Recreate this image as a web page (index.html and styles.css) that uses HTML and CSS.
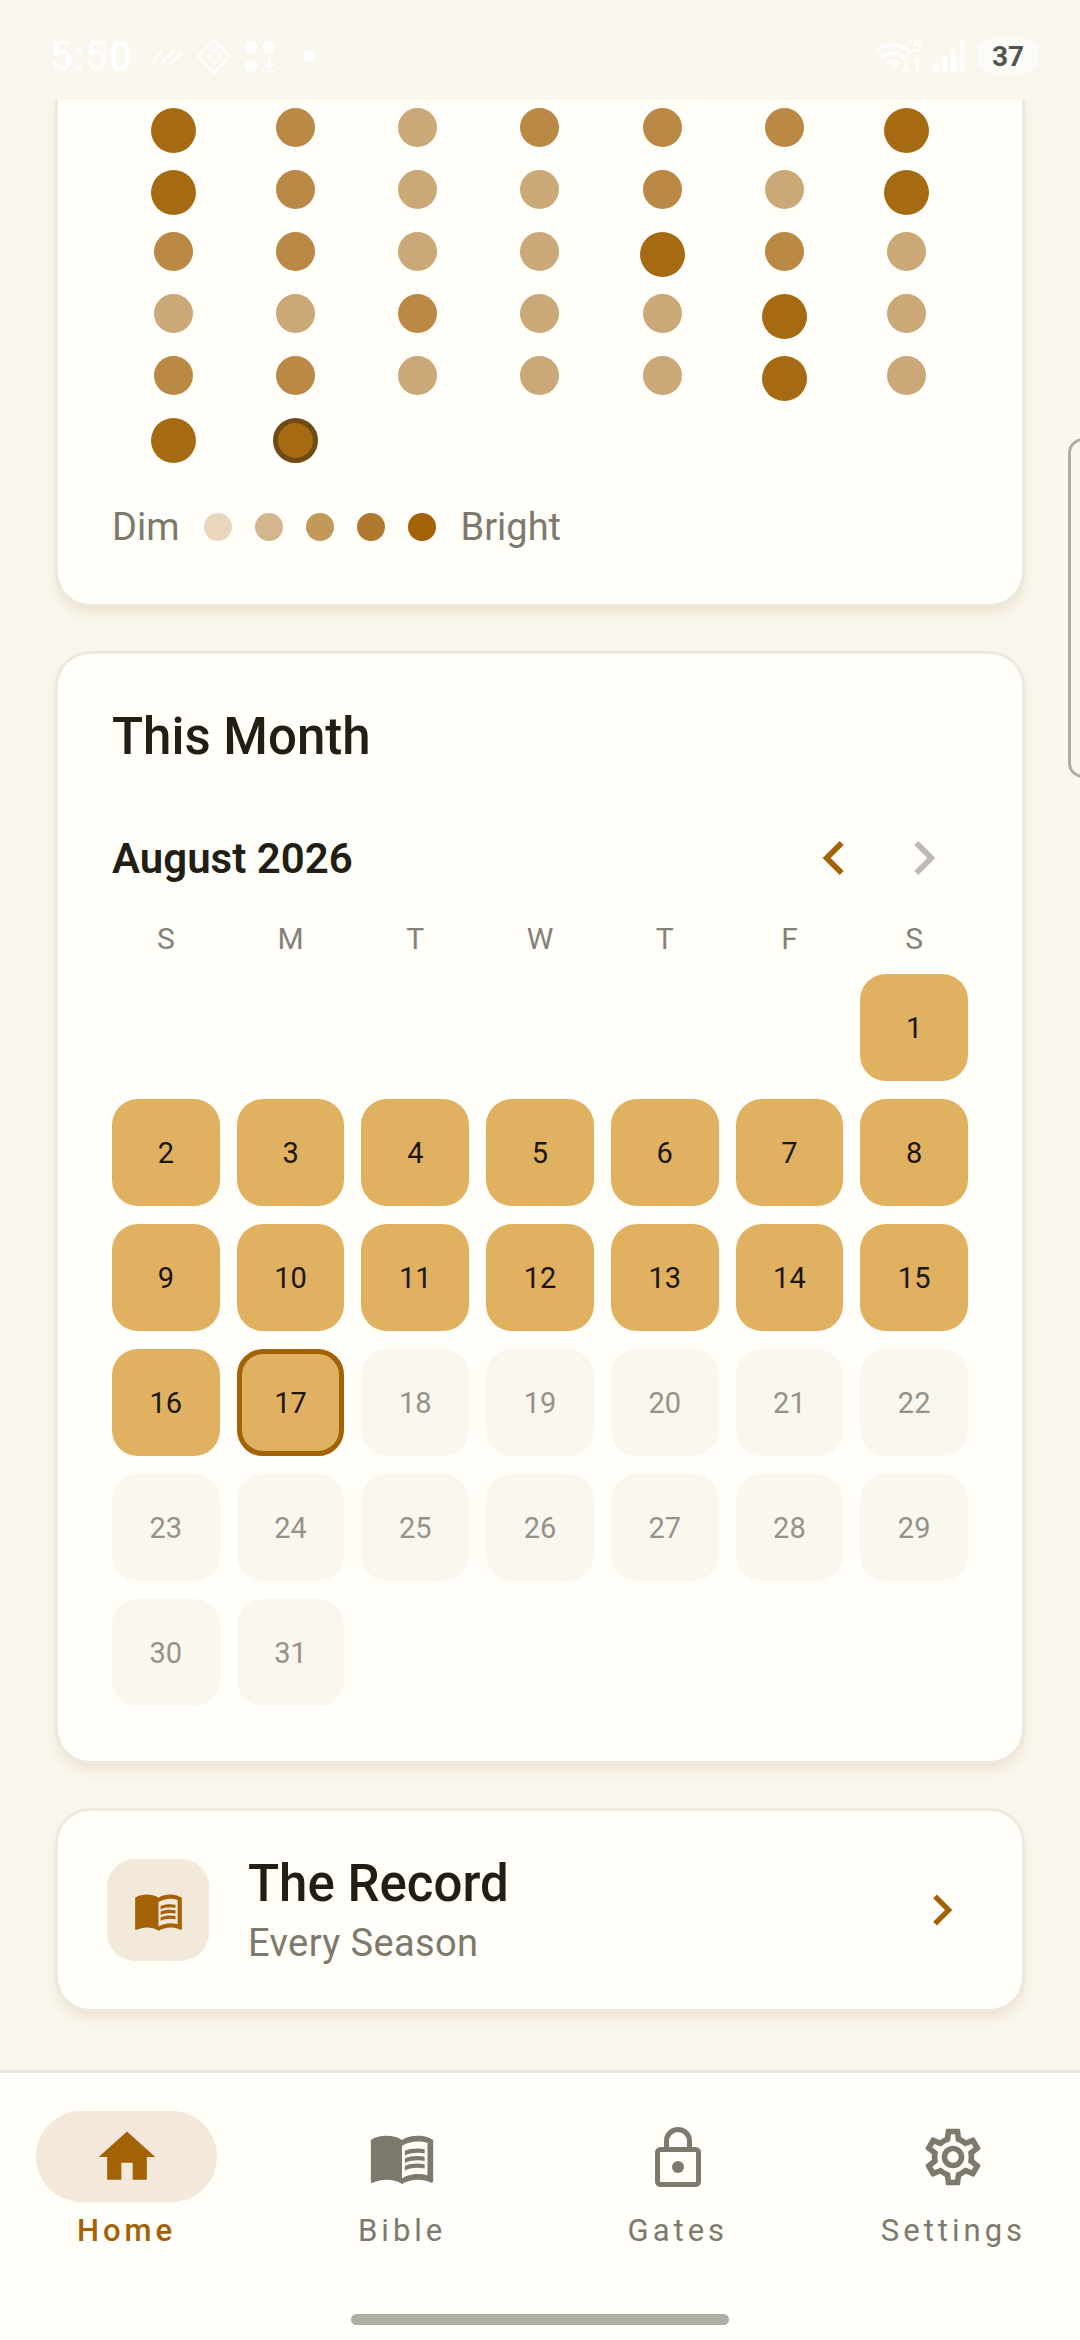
FILE: index.html
```html
<!DOCTYPE html>
<html lang="en">
<head>
<meta charset="utf-8">
<title>Home</title>
<link rel="stylesheet" href="styles.css">
</head>
<body>
<div class="screen">
  <header class="status">
    <div class="status-left">
      <span class="clock">5:50</span>
      <svg class="st-a" viewBox="0 0 30 15"><path d="M1 14.500l2-2M3.500 9.500l6-6.500M10 14l9-10M20 4l2-2M19 14.500l1.500-1.500M22.500 10.500l6-6.500" fill="none" stroke="#fff" stroke-width="2.500" stroke-linecap="round"/></svg>
      <svg class="st-b" viewBox="0 0 36 37"><path d="M18 2L34 18.500 18 35 2 18.500Z" fill="none" stroke="#fff" stroke-width="2.500" stroke-linejoin="round"/><path d="M18 10l4 4h-8ZM11 18l4-4v8ZM25 18l-4 4v-8ZM18 27l-4-4h8Z" fill="#fff"/></svg>
      <svg class="st-c" viewBox="0 0 31 31"><circle cx="6" cy="6" r="6" fill="#fff"/><circle cx="24" cy="6" r="6" fill="#fff"/><circle cx="6" cy="25" r="6" fill="#fff"/><path d="M22.500 17h3v6h3.500l-5 5-5-5h3.500ZM18 29h12v2H18Z" fill="#fff"/></svg>
      <span class="st-dot"></span>
    </div>
    <div class="status-right">
      <span class="wifi-wrap">
        <svg class="st-wifi" viewBox="0 0 47 33"><path d="M2 11a24 24 0 0 1 32 0M7.500 17a16 16 0 0 1 21 0M13 23a8 8 0 0 1 10 0" fill="none" stroke="#fff" stroke-width="3.500" stroke-linecap="round"/><circle cx="19" cy="26" r="2.800" fill="#fff"/><path d="M31 19v13M27.500 28l3.500 4 3.500-4M42 32V19M38.500 23l3.500-4 3.500 4" fill="none" stroke="#fff" stroke-width="2.200"/></svg>
        <span class="st-five">5</span>
      </span>
      <svg class="st-signal" viewBox="0 0 31 33"><rect x="0" y="24" width="4.500" height="9" rx="2" fill="#fff"/><rect x="8.500" y="16" width="4.500" height="17" rx="2" fill="#fff"/><rect x="17" y="8" width="4.500" height="25" rx="2" fill="#fff"/><rect x="26" y="0" width="4.500" height="33" rx="2" fill="#fff"/></svg>
      <span class="battery">37</span>
    </div>
  </header>

  <main class="scroller">
    <section class="card card-stars">
      <div class="stars">
        <i class="s l"></i><i class="s m"></i><i class="s d"></i><i class="s m"></i><i class="s m"></i><i class="s m"></i><i class="s l"></i>
        <i class="s l"></i><i class="s m"></i><i class="s d"></i><i class="s d"></i><i class="s m"></i><i class="s d"></i><i class="s l"></i>
        <i class="s m"></i><i class="s m"></i><i class="s d"></i><i class="s d"></i><i class="s l"></i><i class="s m"></i><i class="s d"></i>
        <i class="s d"></i><i class="s d"></i><i class="s m"></i><i class="s d"></i><i class="s d"></i><i class="s l"></i><i class="s d"></i>
        <i class="s m"></i><i class="s m"></i><i class="s d"></i><i class="s d"></i><i class="s d"></i><i class="s l"></i><i class="s d"></i>
        <i class="s l"></i><i class="s l today"></i>
      </div>
      <div class="legend">
        <span class="legend-text">Dim</span>
        <span class="legend-dots">
          <i class="ld ld1"></i><i class="ld ld2"></i><i class="ld ld3"></i><i class="ld ld4"></i><i class="ld ld5"></i>
        </span>
        <span class="legend-text">Bright</span>
      </div>
    </section>

    <section class="card card-month">
      <h2 class="card-title">This Month</h2>
      <div class="month-head">
        <span class="month-name">August 2026</span>
        <span class="month-nav">
          <svg class="chev chev-on" viewBox="0 0 24 24"><path d="M15.410 7.410L14 6l-6 6 6 6 1.410-1.410L10.830 12z"/></svg>
          <svg class="chev chev-off" viewBox="0 0 24 24"><path d="M10 6L8.590 7.410 13.170 12l-4.580 4.590L10 18l6-6z"/></svg>
        </span>
      </div>
      <div class="weekdays"><span>S</span><span>M</span><span>T</span><span>W</span><span>T</span><span>F</span><span>S</span></div>
      <div class="days">
        <span class="blank"></span><span class="blank"></span><span class="blank"></span><span class="blank"></span><span class="blank"></span><span class="blank"></span>
        <span class="day on">1</span>
        <span class="day on">2</span><span class="day on">3</span><span class="day on">4</span><span class="day on">5</span><span class="day on">6</span><span class="day on">7</span><span class="day on">8</span>
        <span class="day on">9</span><span class="day on">10</span><span class="day on">11</span><span class="day on">12</span><span class="day on">13</span><span class="day on">14</span><span class="day on">15</span>
        <span class="day on">16</span><span class="day on cur">17</span><span class="day">18</span><span class="day">19</span><span class="day">20</span><span class="day">21</span><span class="day">22</span>
        <span class="day">23</span><span class="day">24</span><span class="day">25</span><span class="day">26</span><span class="day">27</span><span class="day">28</span><span class="day">29</span>
        <span class="day">30</span><span class="day">31</span>
      </div>
    </section>

    <section class="card card-record">
      <span class="record-tile">
        <svg class="book-sm" viewBox="0 0 24 24"><path d="M21 5c-1.110-.35-2.330-.5-3.500-.5-1.950 0-4.050.4-5.500 1.500-1.450-1.100-3.550-1.500-5.500-1.500S2.450 4.900 1 6v14.650c0 .25.25.5.5.5.1 0 .15-.05.25-.05C3.100 20.450 5.050 20 6.500 20c1.950 0 4.050.4 5.500 1.500 1.350-.85 3.800-1.500 5.500-1.500 1.650 0 3.350.3 4.750 1.050.1.05.15.05.25.05.25 0 .5-.25.5-.5V6c-.6-.45-1.250-.75-2-1zm0 13.500c-1.100-.35-2.300-.5-3.500-.5-1.700 0-4.150.65-5.500 1.500V8c1.350-.85 3.800-1.500 5.500-1.500 1.200 0 2.400.15 3.500.5v11.500z"/><path d="M17.500 10.500c.88 0 1.730.09 2.500.26V9.240c-.79-.15-1.640-.24-2.500-.24-1.700 0-3.240.29-4.500.83v1.660c1.130-.64 2.700-.99 4.500-.99zM13 12.490v1.660c1.130-.64 2.700-.99 4.500-.99.88 0 1.730.09 2.500.26V11.900c-.79-.15-1.640-.24-2.500-.24-1.700 0-3.240.3-4.500.83zM17.500 14.330c-1.700 0-3.240.29-4.500.83v1.660c1.130-.64 2.700-.99 4.500-.99.88 0 1.730.09 2.500.26v-1.520c-.79-.16-1.640-.24-2.500-.24z"/></svg>
      </span>
      <span class="record-text">
        <span class="record-title">The Record</span>
        <span class="record-sub">Every Season</span>
      </span>
      <svg class="record-chev" viewBox="0 0 24 24"><path d="M10 6L8.590 7.410 13.170 12l-4.580 4.590L10 18l6-6z"/></svg>
    </section>
  </main>

  <nav class="nav">
    <a class="nav-item active">
      <span class="nav-icon">
        <svg class="ic" viewBox="0 0 24 24"><path d="M10 20v-6h4v6h5v-8h3L12 3 2 12h3v8z"/></svg>
      </span>
      <span class="nav-label">Home</span>
    </a>
    <a class="nav-item">
      <span class="nav-icon">
        <svg class="ic" viewBox="0 0 24 24"><path d="M21 5c-1.110-.35-2.330-.5-3.500-.5-1.950 0-4.050.4-5.500 1.500-1.450-1.100-3.550-1.500-5.500-1.500S2.450 4.900 1 6v14.650c0 .25.25.5.5.5.1 0 .15-.05.25-.05C3.100 20.450 5.050 20 6.500 20c1.950 0 4.050.4 5.500 1.500 1.350-.85 3.800-1.500 5.500-1.500 1.650 0 3.350.3 4.750 1.050.1.05.15.05.25.05.25 0 .5-.25.5-.5V6c-.6-.45-1.250-.75-2-1zm0 13.500c-1.100-.35-2.300-.5-3.500-.5-1.700 0-4.150.65-5.500 1.500V8c1.350-.85 3.800-1.500 5.500-1.500 1.200 0 2.400.15 3.500.5v11.500z"/><path d="M17.500 10.500c.88 0 1.730.09 2.500.26V9.240c-.79-.15-1.640-.24-2.500-.24-1.700 0-3.240.29-4.500.83v1.660c1.130-.64 2.700-.99 4.500-.99zM13 12.490v1.660c1.130-.64 2.700-.99 4.500-.99.88 0 1.730.09 2.500.26V11.900c-.79-.15-1.640-.24-2.500-.24-1.700 0-3.240.3-4.500.83zM17.500 14.330c-1.700 0-3.240.29-4.500.83v1.660c1.130-.64 2.700-.99 4.500-.99.88 0 1.730.09 2.500.26v-1.520c-.79-.16-1.640-.24-2.500-.24z"/></svg>
      </span>
      <span class="nav-label">Bible</span>
    </a>
    <a class="nav-item">
      <span class="nav-icon">
        <svg class="ic-lock" viewBox="0 0 46 60"><path d="M11.500 23V14a11.500 11.500 0 0 1 23 0v9" fill="none" stroke="#7D796C" stroke-width="5"/><rect x="2.500" y="22.500" width="41" height="35" rx="3" fill="none" stroke="#7D796C" stroke-width="5"/><circle cx="23" cy="40" r="6" fill="#7D796C"/></svg>
      </span>
      <span class="nav-label">Gates</span>
    </a>
    <a class="nav-item">
      <span class="nav-icon">
        <svg class="ic" viewBox="0 0 24 24"><path d="M19.430 12.980c.04-.32.07-.64.07-.98 0-.34-.03-.66-.07-.98l2.110-1.650c.19-.15.24-.42.12-.64l-2-3.460c-.09-.16-.26-.25-.44-.25-.06 0-.12.01-.17.03l-2.490 1c-.52-.4-1.080-.73-1.690-.98l-.38-2.650C14.460 2.180 14.250 2 14 2h-4c-.25 0-.46.18-.49.42l-.38 2.650c-.61.25-1.170.59-1.690.98l-2.490-1c-.06-.02-.12-.03-.18-.03-.17 0-.34.09-.43.25l-2 3.460c-.13.22-.07.49.12.64l2.110 1.650c-.04.32-.07.65-.07.98 0 .33.03.66.07.98l-2.110 1.650c-.19.15-.24.42-.12.64l2 3.460c.09.16.26.25.44.25.06 0 .12-.01.17-.03l2.490-1c.52.4 1.080.73 1.690.98l.38 2.650c.03.24.24.42.49.42h4c.25 0 .46-.18.49-.42l.38-2.650c.61-.25 1.170-.59 1.690-.98l2.490 1c.06.02.12.03.18.03.17 0 .34-.09.43-.25l2-3.460c.12-.22.07-.49-.12-.64l-2.110-1.650zm-1.980-1.710c.04.31.05.52.05.73 0 .21-.02.43-.05.73l-.14 1.130.89.7 1.080.84-.7 1.210-1.270-.51-1.040-.42-.9.68c-.43.32-.84.56-1.250.73l-1.060.43-.16 1.130-.2 1.350h-1.400l-.19-1.350-.16-1.130-1.060-.43c-.43-.18-.83-.41-1.230-.71l-.91-.7-1.060.43-1.270.51-.7-1.210 1.080-.84.89-.7-.14-1.130c-.03-.31-.05-.54-.05-.74s.02-.43.05-.73l.14-1.130-.89-.7-1.080-.84.7-1.210 1.270.51 1.040.42.9-.68c.43-.32.84-.56 1.250-.73l1.060-.43.16-1.130.2-1.350h1.390l.19 1.350.16 1.130 1.060.43c.43.18.83.41 1.230.71l.91.7 1.060-.43 1.270-.51.7 1.210-1.070.85-.89.7.14 1.130zM12 8c-2.210 0-4 1.790-4 4s1.790 4 4 4 4-1.790 4-4-1.790-4-4-4zm0 6c-1.100 0-2-.9-2-2s.9-2 2-2 2 .9 2 2-.9 2-2 2z"/></svg>
      </span>
      <span class="nav-label">Settings</span>
    </a>
  </nav>

  <span class="edge-handle"></span>
  <span class="home-bar"></span>
</div>
</body>
</html>
```
FILE: styles.css
```css
* { box-sizing: border-box; }
html, body { margin: 0; padding: 0; }
body { background: #FAF7EE; font-family: Roboto, "Noto Sans", sans-serif; }
.screen { position: relative; width: 1080px; height: 2340px; overflow: hidden; display: flex; flex-direction: column; background: #FAF7EE; }

.status { flex: 0 0 100px; height: 100px; display: flex; justify-content: space-between; align-items: center; padding: 12px 41px 0 50px; background: #FAF7EE; position: relative; z-index: 2; }
.status-left, .status-right { display: flex; align-items: center; }
.clock { width: 81px; font-size: 40px; font-weight: 500; letter-spacing: 1px; color: #fff; white-space: nowrap; }
.st-a { width: 30px; height: 15px; margin-left: 21px; }
.st-b { width: 36px; height: 37px; margin-left: 14px; }
.st-c { width: 31px; height: 31px; margin-left: 13px; }
.st-dot { width: 12px; height: 12px; border-radius: 50%; background: #fff; margin-left: 27px; }
.wifi-wrap { position: relative; width: 47px; height: 33px; }
.st-wifi { display: block; width: 47px; height: 33px; }
.st-five { position: absolute; right: 0; top: -2px; font-size: 17px; line-height: 17px; font-weight: 500; color: #fff; }
.st-signal { width: 31px; height: 33px; margin-left: 12px; }
.battery { width: 62px; height: 36px; margin-left: 12px; border-radius: 18px; background: #FDFBF7; color: #55544F; font-size: 28px; font-weight: 700; display: flex; align-items: center; justify-content: center; }

.scroller { flex: 1; min-height: 0; padding: 0 58px; display: flex; flex-direction: column; gap: 50px; overflow: hidden; }
.card { flex: none; background: #FFFEF8; border-radius: 32px; box-shadow: 0 0 0 3px #ECE9E1, 0 7px 14px rgba(190, 140, 70, .24); }
.card-stars { height: 504px; padding: 8px 54px 0; border-radius: 0 0 32px 32px; }
.stars { display: grid; grid-template-columns: repeat(7, 1fr); grid-auto-rows: 39px; row-gap: 23px; justify-items: center; align-items: start; height: 349px; }
.s { display: block; border-radius: 50%; }
.s.l { width: 45px; height: 45px; background: #A66A12; }
.s.m { width: 39px; height: 39px; background: #B98945; }
.s.d { width: 39px; height: 39px; background: #CBA877; }
.s.today { border: 5px solid #6F4A14; }
.legend { display: flex; align-items: center; height: 50px; margin-top: 45px; }
.legend-text { font-size: 38px; color: #7D796C; }
.legend-dots { display: flex; gap: 23px; margin: 0 25px 0 24px; }
.ld { display: block; width: 28px; height: 28px; border-radius: 50%; }
.ld1 { background: #E8D7BC; }
.ld2 { background: #D3B68D; }
.ld3 { background: #C2985B; }
.ld4 { background: #B0792F; }
.ld5 { background: #A46206; }

.card-month { height: 1107px; padding: 49px 54px 0; }
.card-title { margin: 0; font-size: 51px; line-height: 68px; font-weight: 500; color: #231E14; }
.month-head { display: flex; justify-content: space-between; align-items: center; height: 60px; margin-top: 57px; }
.month-name { font-size: 42px; font-weight: 600; color: #231E14; }
.month-nav { display: flex; gap: 22px; margin-right: 10px; }
.chev { display: block; width: 68px; height: 68px; }
.chev-on { fill: #A46206; }
.chev-off { fill: #BDBAB4; }
.weekdays { display: grid; grid-template-columns: repeat(7, 1fr); gap: 17px; margin-top: 32px; height: 36px; align-items: center; text-align: center; font-size: 30px; font-weight: 450; color: #85817A; }
.days { display: grid; grid-template-columns: repeat(7, 1fr); grid-auto-rows: 107px; gap: 18px 17px; margin-top: 18px; }
.day { display: flex; align-items: center; justify-content: center; border-radius: 26px; background: #FAF7EE; font-size: 29px; font-weight: 400; color: #96928A; }
.day.on { background: #E0B160; color: #1C160C; font-weight: 450; }
.day.cur { border: 5px solid #A46206; }

.card-record { height: 198px; padding: 0 49px; display: flex; align-items: center; }
.record-tile { flex: none; width: 102px; height: 102px; border-radius: 28px; background: #F3E9DB; display: flex; align-items: center; justify-content: center; }
.book-sm { width: 51px; height: 51px; fill: #A46206; }
.record-text { flex: 1; display: flex; flex-direction: column; margin-left: 39px; }
.record-title { font-size: 51px; line-height: 62px; font-weight: 500; color: #231E14; }
.record-sub { font-size: 38px; line-height: 50px; margin-top: 3px; letter-spacing: .4px; color: #7D796C; }
.record-chev { width: 62px; height: 62px; fill: #A46206; }

.nav { flex: 0 0 270px; height: 270px; border-top: 3px solid #EBE8DF; background: #FFFEF8; display: flex; justify-content: space-between; padding: 38px 36px 0; }
.nav-item { width: 181px; display: flex; flex-direction: column; align-items: center; color: #7D796C; }
.nav-icon { width: 181px; height: 91px; border-radius: 46px; display: flex; align-items: center; justify-content: center; fill: #7D796C; }
.nav-label { margin-top: 7px; font-size: 31px; line-height: 44px; letter-spacing: 4px; font-weight: 400; white-space: nowrap; }
.nav-item.active { color: #A46206; }
.nav-item.active .nav-icon { background: #F3E8D9; fill: #A46206; }
.nav-item.active .nav-label { font-weight: 500; }
.ic { width: 68px; height: 68px; }
.ic-lock { width: 46px; height: 60px; }

.edge-handle { position: absolute; left: 1068px; top: 438px; width: 30px; height: 340px; border: 3px solid #AEADA7; border-radius: 15px; }
.home-bar { position: absolute; left: 351px; top: 2314px; width: 378px; height: 11px; border-radius: 6px; background: #AEADA6; }
```
